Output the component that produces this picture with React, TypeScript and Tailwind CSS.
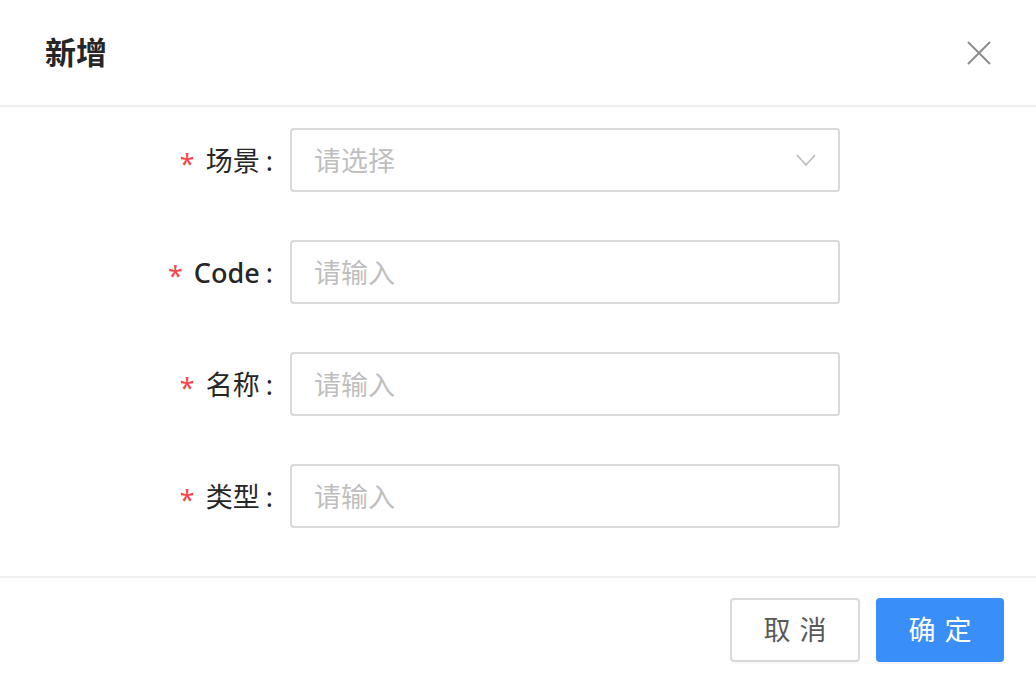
import React from 'react';

const fields = [
  { label: '场景', placeholder: '请选择', select: true },
  { label: 'Code', placeholder: '请输入' },
  { label: '名称', placeholder: '请输入' },
  { label: '类型', placeholder: '请输入' },
];

export default function App(): JSX.Element {
  return (
    <div
      className="w-[1036px] h-[680px] bg-white overflow-hidden flex flex-col text-[#262626]"
      style={{ fontFamily: '"Noto Sans", "Noto Sans CJK SC", sans-serif' }}
    >
      {/* 头部 */}
      <header className="h-[107px] shrink-0 border-b-2 border-[#f0f0f0] flex items-center justify-between pl-[45px] pr-[45px]">
        <div className="text-[31px] font-semibold leading-none text-[#262626]">新增</div>
        <svg width="24" height="24" viewBox="0 0 24 24" className="text-[#8c8c8c]">
          <path d="M1 1L23 23M23 1L1 23" stroke="currentColor" strokeWidth="2" fill="none" />
        </svg>
      </header>

      {/* 表单 */}
      <div className="flex-1 pt-[21px] flex flex-col gap-[48px]">
        {fields.map((f) => (
          <div key={f.label} className="flex items-center">
            <label className="w-[273px] shrink-0 flex items-center justify-end text-[27px] leading-none">
              <span className="text-[#f5484a] mr-[11px] text-[27px] relative top-[3px]">*</span>
              <span className={f.label === 'Code' ? 'font-medium' : ''}>{f.label}</span>
              <span className="ml-[6px]">:</span>
            </label>
            <div className="ml-[17px] w-[550px] h-[64px] border-2 border-[#d9d9d9] rounded-[4px] flex items-center justify-between pl-[22px] pr-[22px]">
              <span className="text-[27px] text-[#bfbfbf] leading-none">{f.placeholder}</span>
              {f.select && (
                <svg width="20" height="12" viewBox="0 0 20 12" className="text-[#bfbfbf]">
                  <path d="M1 1L10 11L19 1" stroke="currentColor" strokeWidth="1.8" fill="none" />
                </svg>
              )}
            </div>
          </div>
        ))}
      </div>

      {/* 底部 */}
      <footer className="h-[104px] shrink-0 border-t-2 border-[#f0f0f0] flex justify-end items-start pt-[20px] pr-[32px] gap-[16px]">
        <button className="w-[130px] h-[64px] border-2 border-[#d9d9d9] rounded-[4px] bg-white text-[#595959] text-[27px] tracking-[9px] pl-[9px] shadow-[0_2px_0_rgba(0,0,0,0.02)]">
          取消
        </button>
        <button className="w-[128px] h-[64px] rounded-[4px] bg-[#3a8ef7] text-white text-[27px] tracking-[9px] pl-[9px] shadow-[0_2px_0_rgba(0,0,0,0.045)]">
          确定
        </button>
      </footer>
    </div>
  );
}
